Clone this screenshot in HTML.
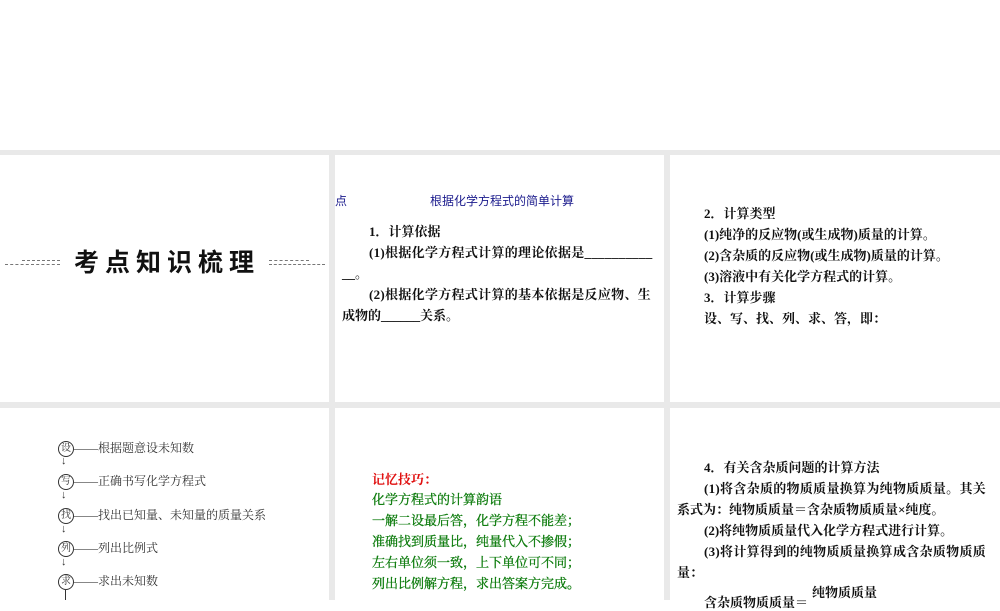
<!DOCTYPE html>
<html><head><meta charset="utf-8"><style>
body{margin:0;width:1000px;height:600px;background:#fff;position:relative;overflow:hidden;font-family:"Liberation Serif","Noto Serif CJK SC",serif;}
.g{position:absolute;background:#e9e9e9}
.p{position:absolute;background:#fff;overflow:hidden}
.t{position:absolute;white-space:nowrap;font-size:13px;color:#111}
.b{font-weight:bold}
.c{display:inline-block;width:14px;height:14px;border:1px solid #333;border-radius:50%;font-size:10px;line-height:14px;text-align:center;vertical-align:middle;}
</style></head><body>
<div class="g" style="left:0;top:150px;width:1000px;height:450px"></div>
<div class="p" style="left:0;top:155px;width:329px;height:247px"></div>
<div class="p" style="left:335px;top:155px;width:329px;height:247px"></div>
<div class="p" style="left:670px;top:155px;width:330px;height:247px"></div>
<div class="p" style="left:0;top:408px;width:329px;height:192px"></div>
<div class="p" style="left:335px;top:408px;width:329px;height:192px"></div>
<div class="p" style="left:670px;top:408px;width:330px;height:192px"></div>

<div style="position:absolute;left:5px;top:264px;width:55px;border-top:1px dashed #777"></div>
<div style="position:absolute;left:22px;top:260px;width:38px;border-top:1px dashed #777"></div>
<div style="position:absolute;left:269px;top:264px;width:56px;border-top:1px dashed #777"></div>
<div style="position:absolute;left:269px;top:260px;width:40px;border-top:1px dashed #777"></div>
<div class="t b" style="left:74px;top:243px;font-size:25px;letter-spacing:6px;font-family:'Liberation Sans','Noto Sans CJK SC',sans-serif;color:#111">考点知识梳理</div>

<div class="t" style="left:335px;top:192px;font-size:12px;color:#1a1a8c;font-family:'Liberation Sans','Noto Sans CJK SC',sans-serif">点</div>
<div class="t" style="left:430px;top:192px;font-size:12px;color:#1a1a8c;font-family:'Liberation Sans','Noto Sans CJK SC',sans-serif">根据化学方程式的简单计算</div>
<div class="t b" style="left:369px;top:221px">1．计算依据</div>
<div class="t b" style="left:369px;top:242px;letter-spacing:0.3px">(1)根据化学方程式计算的理论依据是__________</div>
<div class="t b" style="left:342px;top:263px">__。</div>
<div class="t b" style="left:369px;top:284px;letter-spacing:0.3px">(2)根据化学方程式计算的基本依据是反应物、生</div>
<div class="t b" style="left:342px;top:305px">成物的______关系。</div>

<div class="t b" style="left:704px;top:203px">2．计算类型</div>
<div class="t b" style="left:704px;top:224px">(1)纯净的反应物(或生成物)质量的计算。</div>
<div class="t b" style="left:704px;top:245px">(2)含杂质的反应物(或生成物)质量的计算。</div>
<div class="t b" style="left:704px;top:266px">(3)溶液中有关化学方程式的计算。</div>
<div class="t b" style="left:704px;top:287px">3．计算步骤</div>
<div class="t b" style="left:704px;top:308px">设、写、找、列、求、答，即：</div>

<div class="t" style="left:58px;top:439px;font-size:12px;color:#333"><span class="c">设</span>——根据题意设未知数</div>
<div class="t" style="left:61px;top:455px;font-size:11px;color:#333">↓</div>
<div class="t" style="left:58px;top:472px;font-size:12px;color:#333"><span class="c">写</span>——正确书写化学方程式</div>
<div class="t" style="left:61px;top:489px;font-size:11px;color:#333">↓</div>
<div class="t" style="left:58px;top:506px;font-size:12px;color:#333"><span class="c">找</span>——找出已知量、未知量的质量关系</div>
<div class="t" style="left:61px;top:523px;font-size:11px;color:#333">↓</div>
<div class="t" style="left:58px;top:539px;font-size:12px;color:#333"><span class="c">列</span>——列出比例式</div>
<div class="t" style="left:61px;top:556px;font-size:11px;color:#333">↓</div>
<div class="t" style="left:58px;top:572px;font-size:12px;color:#333"><span class="c">求</span>——求出未知数</div>
<div style="position:absolute;left:65px;top:590px;height:10px;border-left:1px solid #333"></div>

<div class="t b" style="left:372px;top:469px;color:#e01010">记忆技巧：</div>
<div class="t" style="left:372px;top:489px;color:#0a7a0a;-webkit-text-stroke:0.3px #0a7a0a">化学方程式的计算韵语</div>
<div class="t" style="left:372px;top:510px;color:#0a7a0a;-webkit-text-stroke:0.3px #0a7a0a">一解二设最后答，化学方程不能差；</div>
<div class="t" style="left:372px;top:531px;color:#0a7a0a;-webkit-text-stroke:0.3px #0a7a0a">准确找到质量比，纯量代入不掺假；</div>
<div class="t" style="left:372px;top:552px;color:#0a7a0a;-webkit-text-stroke:0.3px #0a7a0a">左右单位须一致，上下单位可不同；</div>
<div class="t" style="left:372px;top:573px;color:#0a7a0a;-webkit-text-stroke:0.3px #0a7a0a">列出比例解方程，求出答案方完成。</div>

<div class="t b" style="left:704px;top:457px">4．有关含杂质问题的计算方法</div>
<div class="t b" style="left:704px;top:478px;letter-spacing:0.3px">(1)将含杂质的物质质量换算为纯物质质量。其关</div>
<div class="t b" style="left:677px;top:499px">系式为：纯物质质量＝含杂质物质质量×纯度。</div>
<div class="t b" style="left:704px;top:520px">(2)将纯物质质量代入化学方程式进行计算。</div>
<div class="t b" style="left:704px;top:541px;letter-spacing:0.3px">(3)将计算得到的纯物质质量换算成含杂质物质质</div>
<div class="t b" style="left:677px;top:562px">量：</div>
<div class="t b" style="left:812px;top:582px">纯物质质量</div>
<div class="t b" style="left:704px;top:592px">含杂质物质质量＝</div>
</body></html>
